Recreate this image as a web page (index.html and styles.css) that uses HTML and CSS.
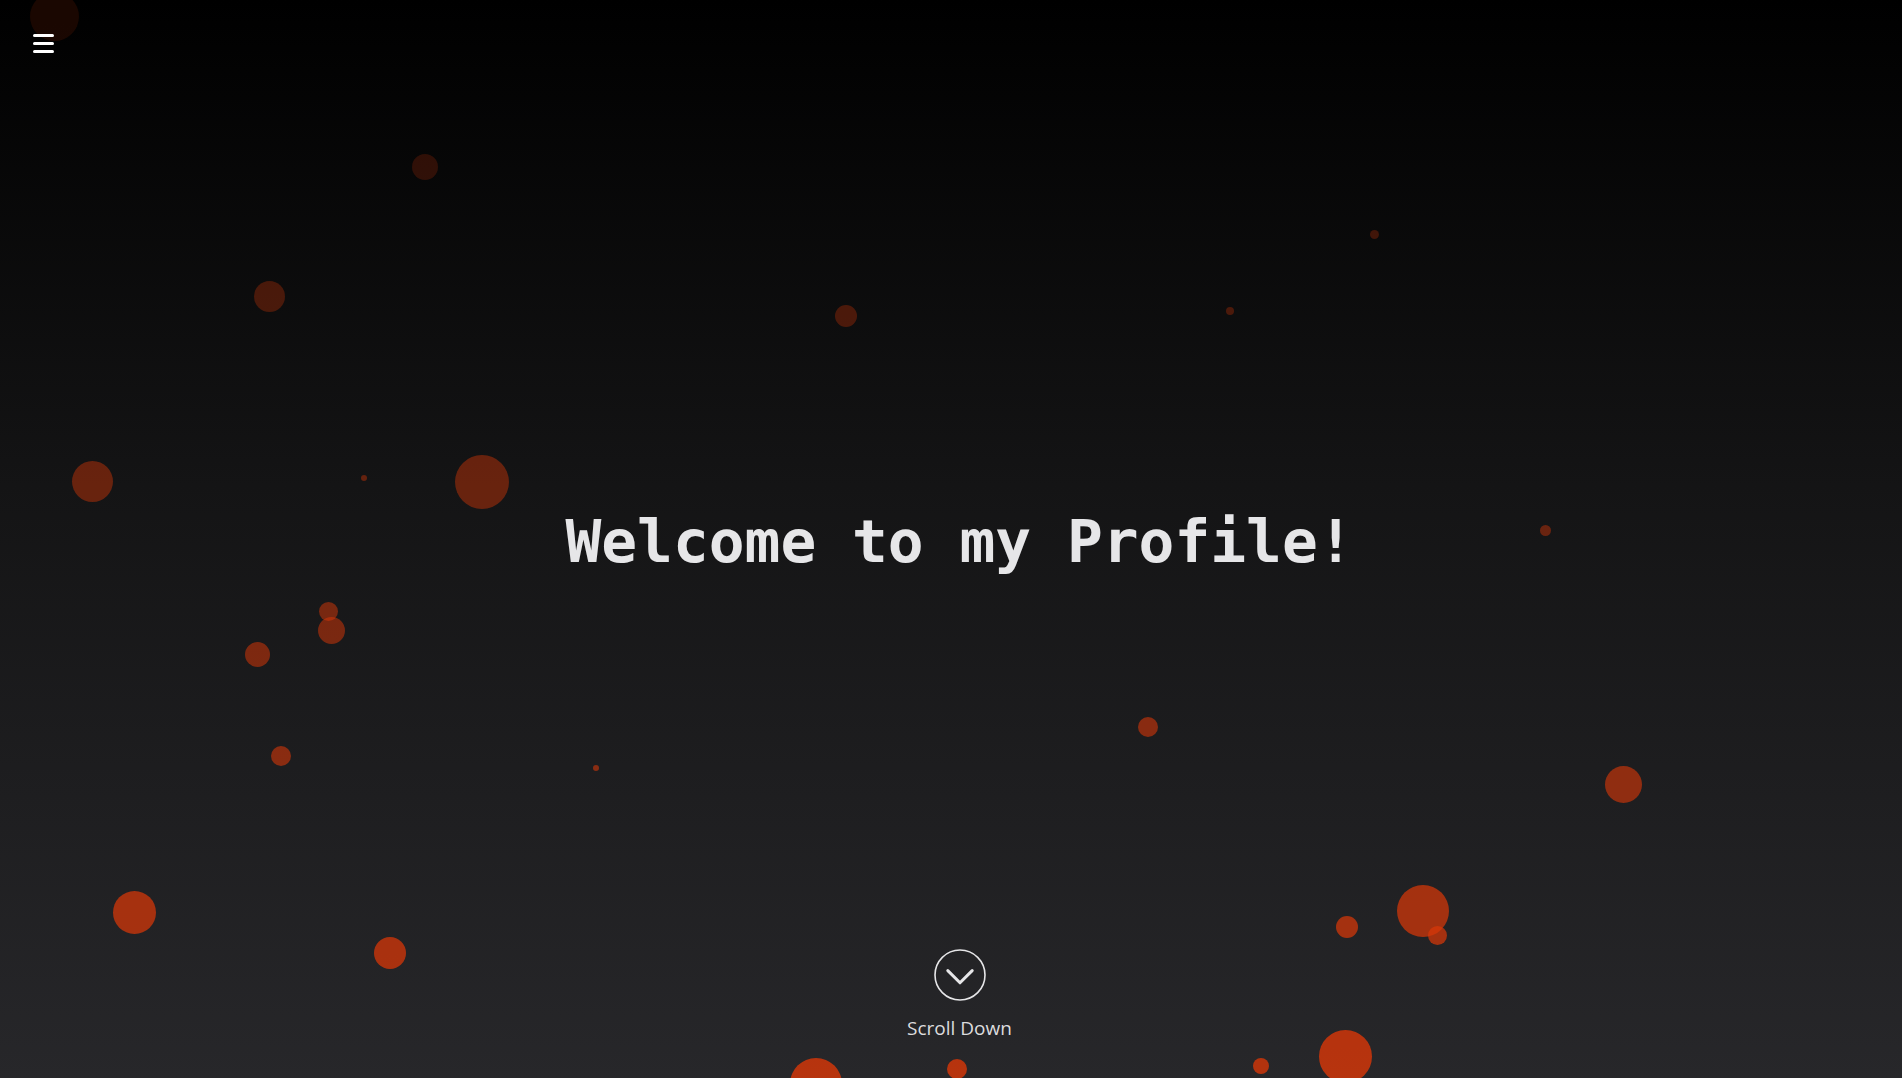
FILE: index.html
```html
<!DOCTYPE html>
<html lang="en">
<head>
<meta charset="utf-8">
<title>Profile</title>
<link rel="stylesheet" href="styles.css">
</head>
<body>
<main class="hero">
  <div class="bubbles" aria-hidden="true">
    <span class="bubble" style="--x:54;--y:16;--r:24.5;--a:0.12"></span>
    <span class="bubble" style="--x:425;--y:167;--r:13;--a:0.2"></span>
    <span class="bubble" style="--x:269;--y:296;--r:15.5;--a:0.3"></span>
    <span class="bubble" style="--x:846;--y:316;--r:11;--a:0.31"></span>
    <span class="bubble" style="--x:1374;--y:234;--r:4.5;--a:0.27"></span>
    <span class="bubble" style="--x:1230;--y:311;--r:4;--a:0.31"></span>
    <span class="bubble" style="--x:92;--y:481;--r:20.5;--a:0.43"></span>
    <span class="bubble" style="--x:364;--y:478;--r:3;--a:0.42"></span>
    <span class="bubble" style="--x:482;--y:482;--r:27;--a:0.43"></span>
    <span class="bubble" style="--x:1545;--y:530;--r:5.5;--a:0.44"></span>
    <span class="bubble" style="--x:328;--y:611;--r:9.5;--a:0.5"></span>
    <span class="bubble" style="--x:331;--y:630;--r:13.5;--a:0.51"></span>
    <span class="bubble" style="--x:257;--y:654;--r:12.5;--a:0.53"></span>
    <span class="bubble" style="--x:1148;--y:727;--r:10;--a:0.59"></span>
    <span class="bubble" style="--x:281;--y:756;--r:10;--a:0.59"></span>
    <span class="bubble" style="--x:596;--y:768;--r:3;--a:0.58"></span>
    <span class="bubble" style="--x:1623;--y:784;--r:18.5;--a:0.62"></span>
    <span class="bubble" style="--x:134;--y:912;--r:21.5;--a:0.73"></span>
    <span class="bubble" style="--x:390;--y:953;--r:16;--a:0.75"></span>
    <span class="bubble" style="--x:1423;--y:911;--r:26;--a:0.72"></span>
    <span class="bubble" style="--x:1347;--y:927;--r:11;--a:0.72"></span>
    <span class="bubble" style="--x:1437;--y:935;--r:9.5;--a:0.72"></span>
    <span class="bubble" style="--x:1345;--y:1056;--r:26.5;--a:0.82"></span>
    <span class="bubble" style="--x:816;--y:1084;--r:26;--a:0.82"></span>
    <span class="bubble" style="--x:957;--y:1069;--r:10;--a:0.82"></span>
    <span class="bubble" style="--x:1261;--y:1066;--r:8;--a:0.8"></span>
  </div>

  <nav class="nav">
    <button class="menu" type="button" aria-label="Menu">
      <span class="bar"></span><span class="bar"></span><span class="bar"></span>
    </button>
  </nav>

  <h1 class="title">Welcome to my Profile!</h1>

  <a class="scroll" href="#about">
    <svg class="scroll-icon" width="52" height="52" viewBox="0 0 52 52">
      <circle cx="26" cy="26" r="25" fill="none" stroke="#e6e6e8" stroke-width="1.6"/>
      <path d="M13.8 21.6 L26 33.8 L38.2 21.6" fill="none" stroke="#e6e6e8" stroke-width="3" stroke-linecap="round" stroke-linejoin="round"/>
    </svg>
    <span class="scroll-label">Scroll Down</span>
  </a>
</main>
</body>
</html>
```

FILE: styles.css
```css
html, body {
  margin: 0;
  padding: 0;
  height: 100%;
  background: #000;
}

.hero {
  position: relative;
  height: 100vh;
  overflow: hidden;
  display: grid;
  grid-template-rows: 1fr auto 1fr;
  padding-left: 17px;
  background: linear-gradient(to bottom, #000000 0%, #141415 45%, #27272a 100%);
}

.bubbles {
  position: absolute;
  inset: 0;
  pointer-events: none;
}

.bubble {
  position: absolute;
  left: calc((var(--x) - var(--r)) * 1px);
  top: calc((var(--y) - var(--r)) * 1px);
  width: calc(var(--r) * 2px);
  height: calc(var(--r) * 2px);
  border-radius: 50%;
  background: rgb(215, 55, 8);
  opacity: var(--a);
}

.nav {
  position: relative;
  grid-row: 1;
  align-self: start;
  padding: 34px 0 0 16px;
}

.menu {
  display: flex;
  flex-direction: column;
  gap: 5px;
  padding: 0;
  margin: 0;
  border: 0;
  background: none;
  cursor: pointer;
}

.bar {
  display: block;
  width: 21px;
  height: 3px;
  border-radius: 1.5px;
  background: #ffffff;
}

.title {
  position: relative;
  grid-row: 2;
  margin: 0;
  padding-top: 5px;
  text-align: center;
  font-family: "DejaVu Sans Mono", "Liberation Mono", monospace;
  font-weight: bold;
  font-size: 59.5px;
  line-height: 1.2;
  color: #e6e6e8;
}

.scroll {
  position: relative;
  grid-row: 3;
  align-self: end;
  justify-self: center;
  display: flex;
  flex-direction: column;
  align-items: center;
  gap: 14px;
  padding-bottom: 37px;
  text-decoration: none;
}

.scroll-icon {
  display: block;
}

.scroll-label {
  font-family: "Open Sans", "Noto Sans", sans-serif;
  font-size: 19px;
  color: #dcdcde;
}
```
